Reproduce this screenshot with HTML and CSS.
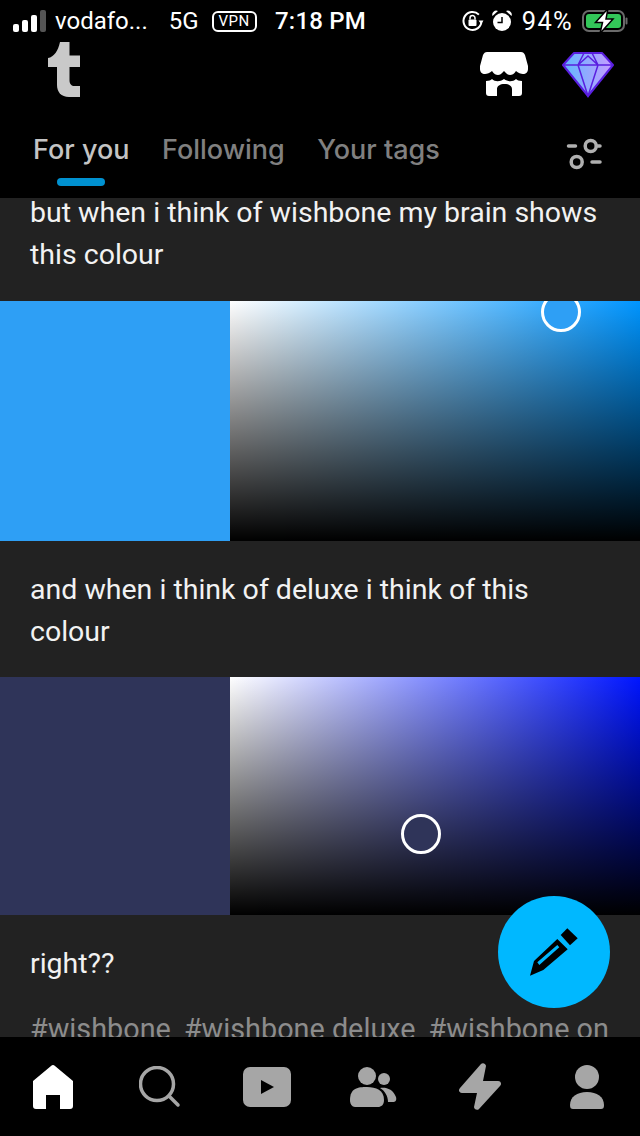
FILE: index.html
```html
<!DOCTYPE html>
<html lang="en">
<head>
<meta charset="utf-8">
<title>Dashboard</title>
<link rel="stylesheet" href="styles.css">
</head>
<body>
<div class="app">
  <header class="head">
    <div class="status">
      <div class="status-left">
        <svg class="signal" width="33" height="22" viewBox="0 0 33 22"><rect x="0" y="14" width="6" height="8" rx="2" fill="#fff"/><rect x="9" y="10" width="6" height="12" rx="2" fill="#fff"/><rect x="18" y="5" width="6" height="17" rx="2" fill="#fff"/><rect x="27" y="0" width="6" height="22" rx="2" fill="#555"/></svg>
        <span class="carrier">vodafo...</span>
        <span class="net">5G</span>
        <span class="vpn">VPN</span>
      </div>
      <span class="clock">7:18 PM</span>
      <div class="status-right">
        <svg class="lock" width="22" height="22" viewBox="0 0 22 22"><path d="M19.500 11a9 9 0 1 1-2.600-6.400" fill="none" stroke="#fff" stroke-width="2"/><path d="M21.500 10.500h-5l2.500 3.500z" fill="#fff"/><rect x="6.500" y="9.500" width="8" height="6.500" rx="1" fill="#fff"/><path d="M8 9.500V8a2.500 2.500 0 0 1 5 0v1.500" fill="none" stroke="#fff" stroke-width="1.500"/></svg>
        <svg class="alarm" width="20" height="22" viewBox="0 0 20 22"><circle cx="10" cy="12" r="9" fill="#fff"/><path d="M10 7v5.500H5.500" fill="none" stroke="#000" stroke-width="1.500"/><path d="M0.500 6a4 4 0 0 1 5.500-5zM19.500 6a4 4 0 0 0-5.500-5z" fill="#fff"/></svg>
        <span class="pct">94%</span>
        <svg class="batt" width="46" height="26" viewBox="0 0 46 26"><rect x="1" y="3" width="41" height="20" rx="6" fill="none" stroke="#6a6a6a" stroke-width="2"/><rect x="4" y="6" width="35" height="14" rx="3" fill="#33c759"/><rect x="43.500" y="9.500" width="2" height="7" rx="1" fill="#6a6a6a"/><path d="M26 0.500 13.500 14.500h7l-2.500 11L31 11h-7z" fill="#fff" stroke="#000" stroke-width="1.500"/></svg>
      </div>
    </div>
    <div class="brand-row">
      <svg class="logo" width="33" height="55" viewBox="0 0 33 55"><path d="M12 0h9.500v13.500H32V25H21.500v13c0 4 2 6 5 6H32v11H21c-8 0-12-5-12-12V25H0v-9c6-1 10-7 12-16z" fill="#c9c9c9"/></svg>
      <div class="brand-actions">
        <svg class="shop" width="48" height="44" viewBox="0 0 48 44"><path d="M7 0h34c2 0 3 1 4 3l3 11v3c0 3-2 5-5 5-2 0-5-1-7-3-2 3-4 4-6 4s-3-1-6-4c-3 3-4 4-6 4s-4-1-6-4c-2 2-5 3-7 3-3 0-5-2-5-5v-3L3 3c1-2 2-3 4-3z" fill="#fff"/><path fill-rule="evenodd" d="M6 29c3 0 5-1 6-2 3 3 8 3 12 0 4 3 9 3 12 0 1 1 3 2 6 2v12c0 2-1 3-3 3H9c-2 0-3-1-3-3zM17 44h15V37c0-3-3-5-7.500-5S17 34 17 37z" fill="#fff"/></svg>
        <svg class="gem" width="52" height="46" viewBox="0 0 52 46"><defs><linearGradient id="gemfill" x1="0" y1="0" x2="1" y2="0"><stop offset="0" stop-color="#5fb8ff"/><stop offset="1" stop-color="#c79cff"/></linearGradient></defs><path d="M12 1h28l11 12-25 31L1 13z" fill="url(#gemfill)" stroke="#5a1fe0" stroke-width="2" stroke-linejoin="round"/><path d="M1 13h50M16 13l6-12M36 13 30 1M16 13l10-9 10 9M16 13l10 31 10-31" fill="none" stroke="#5a1fe0" stroke-width="1.500"/></svg>
      </div>
    </div>
    <nav class="tabs">
      <span class="tab tab-on">For you<i class="tab-mark"></i></span>
      <span class="tab">Following</span>
      <span class="tab">Your tags</span>
      <svg class="filter" width="38" height="34" viewBox="0 0 38 34"><g fill="none" stroke="#b0b0b0" stroke-width="3.500" stroke-linecap="round"><path d="M2.500 8h7M31 8h3M26 24h8"/><circle cx="24.700" cy="8" r="5.500"/><circle cx="10.700" cy="24" r="5.500"/></g></svg>
    </nav>
  </header>
  <main class="post">
    <p class="para para-first">but when i think of wishbone my brain shows this colour</p>
    <div class="pick">
      <div class="swatch swatch-sky"></div>
      <div class="field field-sky"><span class="dot dot-sky"></span></div>
    </div>
    <p class="para para-mid">and when i think of deluxe i think of this colour</p>
    <div class="pick pick-short">
      <div class="swatch swatch-navy"></div>
      <div class="field field-navy"><span class="dot dot-navy"></span></div>
    </div>
    <p class="para para-last">right??</p>
    <p class="tags"><span>#wishbone</span><span>#wishbone deluxe</span><span>#wishbone on</span></p>
    <button class="fab" aria-label="Compose">
      <svg width="50" height="50" viewBox="0 0 50 50"><path d="M38.300 1.300 48.700 11.300 41 18.300 31.700 8z" fill="#000"/><path fill-rule="evenodd" d="M28.300 12 38.700 22.300 14.300 43 1 48.700 5 34zM28.300 18 8.300 35.300 10.300 38 30.300 20.300z" fill="#000"/></svg>
    </button>
  </main>
  <nav class="bar">
    <svg width="42" height="44" viewBox="0 0 42 44"><path d="M19 1a3 3 0 0 1 4 0l18 15v25a3 3 0 0 1-3 3H28V30H14v14H4a3 3 0 0 1-3-3V16z" fill="#fff"/></svg>
    <svg width="42" height="42" viewBox="0 0 42 42"><circle cx="18" cy="18" r="16.500" fill="none" stroke="#a6a6a6" stroke-width="3.500"/><path d="M30 30l9 9" stroke="#a6a6a6" stroke-width="3.500" stroke-linecap="round"/></svg>
    <svg width="48" height="40" viewBox="0 0 48 40"><rect width="48" height="40" rx="7" fill="#a6a6a6"/><path d="M18 13v14l13-7z" fill="#000"/></svg>
    <svg width="48" height="40" viewBox="0 0 48 40"><circle cx="18" cy="9" r="9" fill="#a6a6a6"/><circle cx="35" cy="12" r="6" fill="#a6a6a6"/><path d="M1 33c0-12 8-13 17-13s17 3 17 13c0 5-3 7-6 7H6c-3 0-5-3-5-7z" fill="#a6a6a6"/><path d="M31 21c6-1 13 1 16 9 1 4-1 5-3 5h-5c0-6-3-11-8-14z" fill="#a6a6a6"/></svg>
    <svg width="44" height="48" viewBox="0 0 44 48"><path d="M23 1c2-2 5 0 5 2l-3 15 15 0c3 0 4 3 2 5L21 46c-2 2-5 0-5-2l3-14H4c-3 0-4-3-2-5z" fill="#a6a6a6"/></svg>
    <svg width="34" height="44" viewBox="0 0 34 44"><circle cx="17" cy="12" r="12" fill="#a6a6a6"/><path d="M0 40c0-8 7-13 17-13s17 5 17 13c0 3-1 4-3 4H3c-2 0-3-1-3-4z" fill="#a6a6a6"/></svg>
  </nav>
</div>
</body>
</html>
```
FILE: styles.css
```css
* { box-sizing: border-box; }
html, body { margin: 0; padding: 0; background: #000; }
.app {
  width: 640px;
  height: 1136px;
  display: flex;
  flex-direction: column;
  overflow: hidden;
  font-family: Roboto, "Liberation Sans", sans-serif;
  color: #fff;
}
.head { background: #000; height: 198px; flex: none; }
.status {
  height: 42px;
  display: grid;
  grid-template-columns: 1fr auto 1fr;
  align-items: center;
  padding: 0 12px 0 13px;
  font-size: 24px;
}
.status-left, .status-right { display: flex; align-items: center; }
.status-right { justify-content: flex-end; }
.carrier { margin-left: 9px; }
.net { margin-left: 21px; }
.vpn {
  margin-left: 13px;
  width: 45px;
  height: 21px;
  border: 2px solid #fff;
  border-radius: 6px;
  font-size: 15px;
  line-height: 17px;
  text-align: center;
  letter-spacing: 0.5px;
}
.clock { font-weight: 500; letter-spacing: 0.2px; }
.alarm { margin-left: 8px; }
.pct { margin-left: 10px; font-size: 25.5px; letter-spacing: 1.3px; }
.batt { margin-left: 9px; }
.brand-row {
  height: 92px;
  display: flex;
  justify-content: space-between;
  align-items: flex-start;
  padding: 0 26px 0 48px;
}
.brand-actions { display: flex; gap: 34px; padding-top: 10px; }
.tabs {
  display: flex;
  align-items: flex-start;
  gap: 32.5px;
  padding: 0 36px 0 33px;
  height: 64px;
  font-family: Inter, Roboto, sans-serif;
  font-size: 27px;
  font-weight: 500;
  color: #808080;
  line-height: 32px;
}
.tab { position: relative; }
.tab-on { color: #c4c4c4; }
.tab-mark {
  position: absolute;
  left: 24px;
  top: 44px;
  width: 48px;
  height: 8px;
  border-radius: 4px;
  background: #0091d0;
}
.filter { margin-left: auto; margin-top: 4px; }
.post {
  position: relative;
  flex: 1;
  min-height: 0;
  background: #222;
  overflow: hidden;
}
.para {
  margin: 0;
  padding: 26px 30px;
  font-size: 28.5px;
  line-height: 42px;
  color: #f2f2f2;
}
.para-first { margin-top: -33px; padding-top: 27px; padding-bottom: 25px; }
.para-mid { padding-top: 28px; padding-bottom: 24px; }
.pick { display: flex; height: 240px; }
.pick-short { height: 238px; }
.swatch { width: 230px; flex: none; }
.swatch-sky { background: #2e9ff5; }
.swatch-navy { background: #2f3459; }
.field { position: relative; flex: 1; overflow: hidden; }
.field-sky { background: linear-gradient(to bottom, rgba(0,0,0,0), #000), linear-gradient(to right, #fff, #0095ff); }
.field-navy { background: linear-gradient(to bottom, rgba(0,0,0,0), #000), linear-gradient(to right, #fff, #0015ff); }
.dot {
  position: absolute;
  width: 40px;
  height: 40px;
  border: 3.5px solid #fff;
  border-radius: 50%;
}
.dot-sky { left: 311px; top: -9px; background: #2e9ff5; }
.dot-navy { left: 171px; top: 137px; background: #2f3459; }
.para-last { padding-top: 28px; padding-bottom: 23px; }
.tags {
  margin: 0;
  padding: 0 30px;
  display: flex;
  gap: 13px;
  white-space: nowrap;
  font-size: 28.8px;
  line-height: 42px;
  color: #8c8c8c;
}
.fab {
  position: absolute;
  left: 498px;
  top: 698px;
  width: 112px;
  height: 112px;
  padding: 0;
  border: 0;
  border-radius: 50%;
  background: #00b8ff;
  display: flex;
  align-items: center;
  justify-content: center;
}
.bar {
  flex: none;
  height: 99px;
  background: #000;
  display: grid;
  grid-template-columns: repeat(6, 1fr);
  justify-items: center;
  align-items: center;
}
```
